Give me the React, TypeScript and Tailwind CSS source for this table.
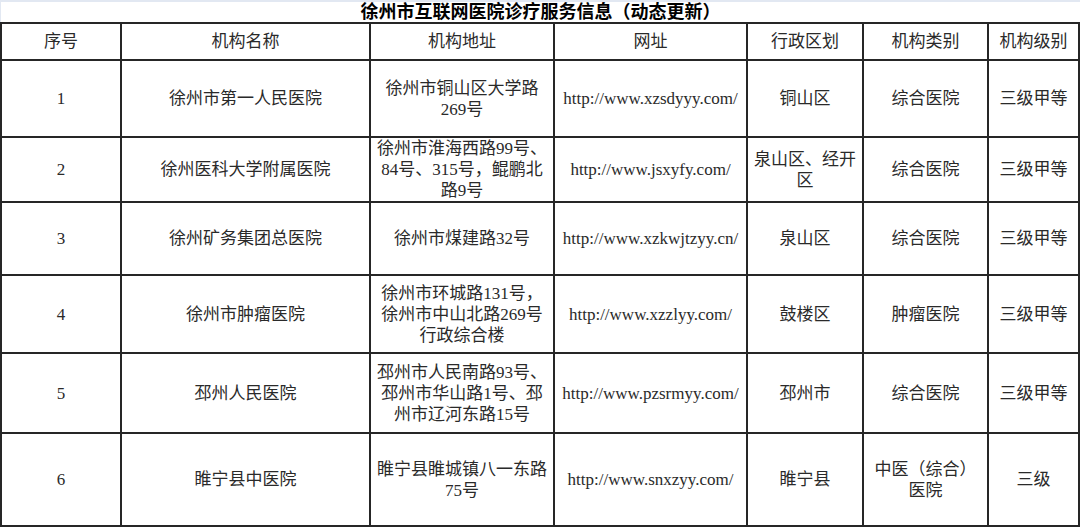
import React from 'react'

interface Hospital {
  id: string
  name: string
  address: string
  url: string
  district: string
  category: string
  level: string
  height: number
}

const HOSPITALS: Hospital[] = [
  {
    id: '1',
    name: '徐州市第一人民医院',
    address: '徐州市铜山区大学路269号',
    url: 'http://www.xzsdyyy.com/',
    district: '铜山区',
    category: '综合医院',
    level: '三级甲等',
    height: 77,
  },
  {
    id: '2',
    name: '徐州医科大学附属医院',
    address: '徐州市淮海西路99号、84号、315号，鲲鹏北路9号',
    url: 'http://www.jsxyfy.com/',
    district: '泉山区、经开区',
    category: '综合医院',
    level: '三级甲等',
    height: 63,
  },
  {
    id: '3',
    name: '徐州矿务集团总医院',
    address: '徐州市煤建路32号',
    url: 'http://www.xzkwjtzyy.cn/',
    district: '泉山区',
    category: '综合医院',
    level: '三级甲等',
    height: 73,
  },
  {
    id: '4',
    name: '徐州市肿瘤医院',
    address: '徐州市环城路131号，徐州市中山北路269号行政综合楼',
    url: 'http://www.xzzlyy.com/',
    district: '鼓楼区',
    category: '肿瘤医院',
    level: '三级甲等',
    height: 78,
  },
  {
    id: '5',
    name: '邳州人民医院',
    address: '邳州市人民南路93号、邳州市华山路1号、邳州市辽河东路15号',
    url: 'http://www.pzsrmyy.com/',
    district: '邳州市',
    category: '综合医院',
    level: '三级甲等',
    height: 80,
  },
  {
    id: '6',
    name: '睢宁县中医院',
    address: '睢宁县睢城镇八一东路75号',
    url: 'http://www.snxzyy.com/',
    district: '睢宁县',
    category: '中医（综合）医院',
    level: '三级',
    height: 93,
  },
]

const HEADERS = ['序号', '机构名称', '机构地址', '网址', '行政区划', '机构类别', '机构级别']
const WIDTHS = [120, 249, 184, 193, 116, 125, 91]

const cell = 'border-2 border-[#262626] px-[4px] py-0 text-center align-middle'

export default function App() {
  return (
    <div
      className="w-[1080px] h-[527px] overflow-hidden bg-white text-[#2a2a2a] text-[17px] leading-[21px]"
      style={{ fontFamily: '"Liberation Serif", "Noto Sans CJK SC", serif' }}
    >
      {/* top strip */}
      <div className="h-[2px] bg-[#e2e8f2]" />

      {/* title */}
      <div className="h-[20px] flex items-center justify-center border-l border-[#e2e8f2]">
        <h1 className="text-[18px] font-bold leading-[20px] text-black">
          徐州市互联网医院诊疗服务信息（动态更新）
        </h1>
      </div>

      <table className="w-[1079px] table-fixed border-collapse">
        <colgroup>
          {WIDTHS.map((w, i) => (
            <col key={i} style={{ width: w }} />
          ))}
        </colgroup>
        <thead>
          <tr className="h-[37px]">
            {HEADERS.map((h) => (
              <th key={h} className={`${cell} font-normal`}>
                {h}
              </th>
            ))}
          </tr>
        </thead>
        <tbody>
          {HOSPITALS.map((row) => (
            <tr key={row.id} style={{ height: row.height }}>
              <td className={cell}>{row.id}</td>
              <td className={cell}>{row.name}</td>
              <td className={cell}>{row.address}</td>
              <td className={`${cell} whitespace-nowrap`}>{row.url}</td>
              <td className={cell}>{row.district}</td>
              <td className={cell}>{row.category}</td>
              <td className={cell}>{row.level}</td>
            </tr>
          ))}
        </tbody>
      </table>
    </div>
  )
}
